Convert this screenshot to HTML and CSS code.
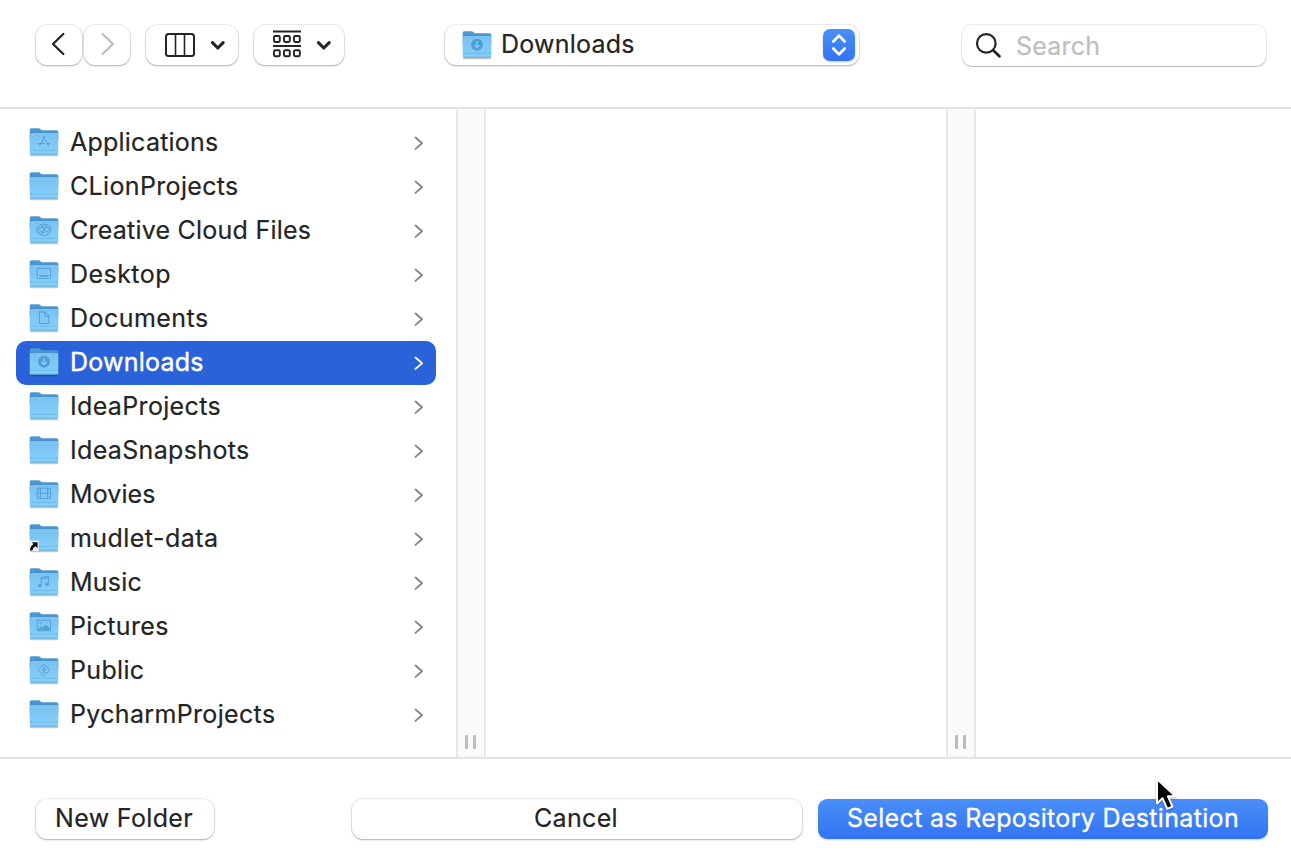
FILE: index.html
```html
<!DOCTYPE html>
<html lang="en">
<head>
<meta charset="utf-8">
<title>Open</title>
<link rel="stylesheet" href="styles.css">
</head>
<body>
<svg class="defs" width="0" height="0" aria-hidden="true">
  <defs>
    <linearGradient id="back" x1="0" y1="0" x2="0" y2="1"><stop offset="0" stop-color="#4f9bd5"/><stop offset="1" stop-color="#3f84bf"/></linearGradient>
    <linearGradient id="front" x1="0" y1="0" x2="0" y2="1"><stop offset="0" stop-color="#7ac2f1"/><stop offset="1" stop-color="#84d0fa"/></linearGradient>
    <symbol id="folder" viewBox="0 0 30 30">
      <path d="M1 27.5h28v.8q0 .9-.7.9H1.700q-.7 0-.7-.9z" fill="#000" opacity=".22"/>
      <path d="M.7 3q0-1.800 1.700-1.800h7.200q1 0 1.700.8l.7.700q.5.500 1.300.5h14.300q1.700 0 1.700 1.600V14H.7z" fill="url(#back)"/>
      <path d="M.7 7.600q0-1.600 1.600-1.600h25.400q1.600 0 1.600 1.600v18.600q0 1.400-1.400 1.400H2.100q-1.400 0-1.400-1.400z" fill="url(#front)"/>
      <path d="M1 23.300h28" stroke="#6ab4e4" stroke-width=".8"/>
      <path d="M1.400 27.300h27.200" stroke="#579dcb" stroke-width=".8"/>
    </symbol>
    <symbol id="chevron" viewBox="0 0 12 16"><path d="M2.500 2.500l6.600 5.700-6.600 5.700" fill="none" stroke="currentColor" stroke-width="1.900" stroke-linecap="round" stroke-linejoin="round"/></symbol>
    <symbol id="down" viewBox="0 0 16 12"><path d="M2.400 3.700l5.400 5.300 5.400-5.300" fill="none" stroke="currentColor" stroke-width="3.100" stroke-linecap="round" stroke-linejoin="round"/></symbol>
  </defs>
</svg>
<div class="dialog">
  <header class="toolbar">
    <button class="btn nav back" aria-label="Back"><svg width="16" height="26" viewBox="0 0 16 26"><path d="M13.300 3L3 13l10.300 10" fill="none" stroke="currentColor" stroke-width="2.300" stroke-linecap="round" stroke-linejoin="round"/></svg></button>
    <button class="btn nav disabled" aria-label="Forward"><svg width="16" height="26" viewBox="0 0 16 26"><path d="M3.600 3l10.300 10-10.300 10" fill="none" stroke="currentColor" stroke-width="2.300" stroke-linecap="round" stroke-linejoin="round"/></svg></button>
    <button class="btn view" aria-label="Columns">
      <svg width="32" height="26" viewBox="0 0 32 26"><g fill="none" stroke="currentColor" stroke-width="2"><rect x="2" y="2" width="28" height="22" rx="2.500"/><path d="M11.500 2v22M20.500 2v22" stroke-width="1.600"/></g></svg>
      <svg width="16" height="12"><use href="#down"/></svg>
    </button>
    <button class="btn group" aria-label="Group">
      <svg width="30" height="30" viewBox="0 0 30 30"><g fill="none" stroke="currentColor" stroke-width="1.900"><path d="M1 2.500h28M1 17h28"/><rect x="2" y="7" width="5.800" height="6" rx="1.200"/><rect x="12" y="7" width="5.800" height="6" rx="1.200"/><rect x="22" y="7" width="5.800" height="6" rx="1.200"/><rect x="2" y="21.200" width="5.800" height="6" rx="1.200"/><rect x="12" y="21.200" width="5.800" height="6" rx="1.200"/><rect x="22" y="21.200" width="5.800" height="6" rx="1.200"/></g></svg>
      <svg width="16" height="12"><use href="#down"/></svg>
    </button>
    <button class="btn location">
      <svg class="folder" viewBox="0 0 30 30"><use href="#folder"/><circle cx="15" cy="14.700" r="6" fill="#4f9ed5"/><path d="M15 11.300v6.200M12.400 15l2.600 2.600 2.600-2.600" stroke="#83cdf7" stroke-width="1.400" fill="none"/></svg>
      <span class="place">Downloads</span>
      <span class="stepper"><svg width="32" height="32" viewBox="0 0 32 32"><path d="M10.300 12.500L16 6.600l5.700 5.900M10.300 19.500l5.700 5.900 5.700-5.900" fill="none" stroke="#fff" stroke-width="2.700" stroke-linecap="round" stroke-linejoin="round"/></svg></span>
    </button>
    <div class="search">
      <svg width="28" height="28" viewBox="0 0 28 28"><g fill="none" stroke="#242424" stroke-width="2.200" stroke-linecap="round"><circle cx="11.300" cy="11.400" r="9.300"/><path d="M18.200 18.200l6.200 6.100" stroke-width="2.800"/></g></svg>
      <span>Search</span>
    </div>
  </header>
  <main class="browser">
    <ul class="files">
      <li><svg class="folder" viewBox="0 0 30 30"><use href="#folder"/><path d="M16 9.300l-5.800 10M14 9.300l5.800 10M8.400 16.600h7.500M18 16.600h3.600" class="mark"/></svg><span class="mid">Applications</span><svg class="chev"><use href="#chevron"/></svg></li>
      <li><svg class="folder" viewBox="0 0 30 30"><use href="#folder"/></svg><span>CLionProjects</span><svg class="chev"><use href="#chevron"/></svg></li>
      <li><svg class="folder" viewBox="0 0 30 30"><use href="#folder"/><g class="mark"><ellipse cx="14.800" cy="14.800" rx="7.200" ry="5.700"/><circle cx="12.200" cy="15.300" r="3.100"/><path d="M11 15.400q2 2.500 4.400 1.800M12.300 11.600q3.800-2.200 5.900.5M14 12.800l3.800 4.100q2 .4 2.700-1.400.3-2.700-2.700-3.100-3.200.3-3.100 3"/></g></svg><span class="mid">Creative Cloud Files</span><svg class="chev"><use href="#chevron"/></svg></li>
      <li><svg class="folder" viewBox="0 0 30 30"><use href="#folder"/><g class="mark"><rect x="8.200" y="9.500" width="13.400" height="10" rx="1"/><path d="M10.500 17h9" stroke-width="1.600"/></g></svg><span class="wide">Desktop</span><svg class="chev"><use href="#chevron"/></svg></li>
      <li><svg class="folder" viewBox="0 0 30 30"><use href="#folder"/><path d="M10.400 9h5.500l3.900 4v7.500h-9.400zM15.600 9v4.300h4.200" class="mark"/></svg><span class="wide">Documents</span><svg class="chev"><use href="#chevron"/></svg></li>
      <li class="selected"><svg class="folder" viewBox="0 0 30 30"><use href="#folder"/><circle cx="15" cy="14.700" r="6" fill="#4f9ed5"/><path d="M15 11.300v6.200M12.400 15l2.600 2.600 2.600-2.600" stroke="#83cdf7" stroke-width="1.400" fill="none"/></svg><span class="mid">Downloads</span><svg class="chev"><use href="#chevron"/></svg></li>
      <li><svg class="folder" viewBox="0 0 30 30"><use href="#folder"/></svg><span>IdeaProjects</span><svg class="chev"><use href="#chevron"/></svg></li>
      <li><svg class="folder" viewBox="0 0 30 30"><use href="#folder"/></svg><span>IdeaSnapshots</span><svg class="chev"><use href="#chevron"/></svg></li>
      <li><svg class="folder" viewBox="0 0 30 30"><use href="#folder"/><g class="mark"><rect x="8.200" y="9.200" width="13.400" height="10.400" rx=".6"/><path d="M11.400 9.200v10.400M18.400 9.200v10.400M11.400 14.400h7"/><path d="M9.800 10v9M20 10v9" stroke-dasharray="1 1.300" stroke-width="1.200"/></g></svg><span class="tight">Movies</span><svg class="chev"><use href="#chevron"/></svg></li>
      <li><svg class="folder" viewBox="0 0 30 30"><use href="#folder"/><path d="M.3 17.700h9.400v10.300H.3z" fill="#f1f5f8"/><path d="M2.600 19.200h6v6l-1.900-1.900q-3 1.200-3.400 4.200H1q0-4.200 3.500-6.400z" fill="#111"/></svg><span class="wide">mudlet-data</span><svg class="chev"><use href="#chevron"/></svg></li>
      <li><svg class="folder" viewBox="0 0 30 30"><use href="#folder"/><g class="mark"><path d="M12.200 18.500v-8l7.200-1.400v8M12.200 12l7.200-1.400"/><ellipse cx="10.700" cy="18.800" rx="1.500" ry="1.200" fill="#4897cf"/><ellipse cx="17.900" cy="17.300" rx="1.500" ry="1.200" fill="#4897cf"/></g></svg><span class="mid">Music</span><svg class="chev"><use href="#chevron"/></svg></li>
      <li><svg class="folder" viewBox="0 0 30 30"><use href="#folder"/><g class="mark"><rect x="8.200" y="9.200" width="13.400" height="10.600" rx=".8"/><circle cx="11.500" cy="12.200" r=".8"/><path d="M9 18.700l3-3 1.800 1.500 3-3.200 4.300 4.400z" fill="#4897cf"/></g></svg><span>Pictures</span><svg class="chev"><use href="#chevron"/></svg></li>
      <li><svg class="folder" viewBox="0 0 30 30"><use href="#folder"/><g class="mark"><path d="M14.700 8.800l6.200 6.200-6.200 6.200L8.500 15z"/><path d="M15 13.400v2.600l-1.700 2.400M15 16l1.500 2M12.700 15.200l2-1.600 2 1.300"/><circle cx="15.200" cy="11.900" r=".4"/></g></svg><span>Public</span><svg class="chev"><use href="#chevron"/></svg></li>
      <li><svg class="folder" viewBox="0 0 30 30"><use href="#folder"/></svg><span>PycharmProjects</span><svg class="chev"><use href="#chevron"/></svg></li>
    </ul>
    <div class="divider"><i></i><i></i></div>
    <div class="pane"></div>
    <div class="divider"><i></i><i></i></div>
    <div class="pane rest"></div>
  </main>
  <footer class="actions">
    <button class="btn new"><span>New Folder</span></button>
    <button class="btn cancel"><span>Cancel</span></button>
    <button class="btn primary"><span>Select as Repository Destination</span></button>
  </footer>
</div>
<svg class="cursor" width="26" height="38" viewBox="0 0 26 38"><path d="M4 3v24.500l5.600-5.200 4.700 10.500 5.200-2.300-4.600-10.200h7.500z" fill="#050505" stroke="#fff" stroke-width="2" stroke-linejoin="round"/></svg>
</body>
</html>
```

FILE: styles.css
```css
* { box-sizing: border-box; }
body {
  margin: 0;
  background: #fff;
  color: #242424;
  font: 25px/44px Inter, "Liberation Sans", sans-serif;
  -webkit-text-stroke: .2px currentColor;
  overflow: hidden;
}
.defs { position: absolute; }
.dialog { width: 1291px; height: 862px; display: flex; flex-direction: column; }
.toolbar {
  height: 109px;
  flex: none;
  border-bottom: 2px solid #e4e4e4;
  padding: 25px 25px 0 36px;
  display: flex;
  align-items: flex-start;
}
.btn {
  height: 40px;
  padding: 0;
  border: 0;
  border-radius: 11px;
  background: #fff;
  color: #242424;
  font: inherit;
  line-height: 38px;
  white-space: nowrap;
  display: flex;
  align-items: center;
  flex: none;
  box-shadow: 0 0 0 1px rgba(0,0,0,.07), 0 1px 2px 0 rgba(0,0,0,.27);
}
.btn.nav { width: 46px; justify-content: center; padding-bottom: 2px; margin-right: 2px; }
.btn.back { padding-right: 3px; }
.btn.disabled { color: #bdbdbd; margin-right: 16px; }
.view { width: 92px; padding-left: 18px; gap: 14px; margin-right: 16px; }
.group { width: 90px; padding-left: 18px; gap: 14px; margin-right: 101px; }
.group svg:first-child { margin-top: -3px; }
.location { width: 414px; padding: 0 4px 0 17px; margin-right: 103px; }
.folder { width: 30px; height: 30px; flex: none; }
.place { margin-left: 9px; flex: 1; text-align: left; letter-spacing: .22px; padding-bottom: 2px; }
.stepper {
  width: 32px;
  height: 32px;
  border-radius: 7px;
  display: flex;
  background: linear-gradient(#4a8ff8, #3273f3);
  box-shadow: 0 1px 2px rgba(50,115,243,.35);
}
.search {
  width: 304px;
  height: 41px;
  padding-left: 13px;
  border-radius: 10px;
  box-shadow: 0 0 0 1px rgba(0,0,0,.07), 0 1px 1px 0 rgba(0,0,0,.22);
  display: flex;
  align-items: center;
  gap: 13px;
  color: #bebebe;
  line-height: 42px;
  letter-spacing: .2px;
}
.browser { height: 648px; flex: none; display: flex; }
.files { width: 456px; margin: 0; padding: 12px 20px 0 16px; list-style: none; }
.files li {
  height: 44px;
  border-radius: 10px;
  padding: 0 11px 2px 13px;
  display: flex;
  align-items: center;
}
.files li span { flex: 1; margin-left: 11px; line-height: 42px; padding-bottom: 1px; white-space: nowrap; letter-spacing: .34px; }
.files li span.wide { letter-spacing: .45px; }
.files li span.mid { letter-spacing: .23px; }
.files li span.tight { letter-spacing: .08px; }
.files .selected { background: #2a62d9; color: #fff; -webkit-text-stroke-width: .4px; }
.mark { fill: none; stroke: #4897cf; stroke-width: 1; opacity: .8; }
.chev { width: 12px; height: 16px; margin-top: 1px; color: #858585; }
.selected .chev { color: #fff; }
.divider {
  width: 30px;
  background: #fafafa;
  border: solid #e8e8e8;
  border-width: 0 2px;
  display: flex;
  justify-content: center;
  align-items: flex-end;
  gap: 5px;
  padding: 0 1px 8px 0;
}
.divider i { width: 3px; height: 14px; background: #bcbcbc; border-radius: 1px; }
.pane { width: 460px; }
.pane.rest { flex: 1; }
.actions {
  flex: 1;
  border-top: 2px solid #e4e4e4;
  padding: 40px 23px 0 36px;
  display: flex;
}
.actions .btn { justify-content: center; padding: 0 2px 2px 0; letter-spacing: .33px; }
.new { width: 178px; margin-right: 138px; }
.cancel { width: 450px; margin-right: 16px; }
.actions .primary {
  width: 450px;
  padding-right: 0;
  border-radius: 9px;
  background: linear-gradient(#4a8ff8, #3273f3);
  color: #fff;
  -webkit-text-stroke-width: .3px;
  box-shadow: 0 1px 2px rgba(50,115,243,.3);
}
.cursor { position: absolute; left: 1153px; top: 776px; filter: drop-shadow(0 1px 1px rgba(0,0,0,.3)); }
```
